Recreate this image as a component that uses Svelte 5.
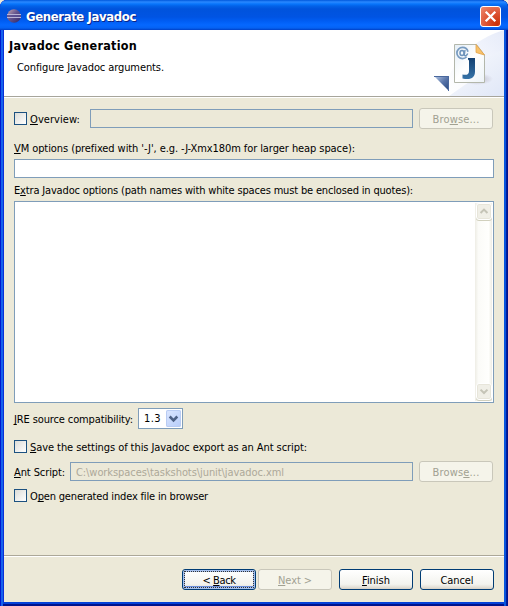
<script>
  // Spaces the letters of a label so that it takes up the given width.
  function fit(node, width) {
    const natural = node.getBoundingClientRect().width;
    node.style.letterSpacing = `${(width - natural) / node.textContent.length}px`;
  }
</script>

{#snippet label(before, key, after, width)}
  <span class="label" use:fit={width}>{before}<u>{key}</u>{after}</span>
{/snippet}

<div class="window">
  <div class="titlebar">
    <svg class="eclipse" width="16" height="16" viewBox="0 0 16 16">
      <defs>
        <linearGradient id="ball" x1="0" y1="0" x2="1" y2="1">
          <stop offset="0" stop-color="#c9a9ae" /><stop offset=".45" stop-color="#65568f" /><stop offset="1" stop-color="#2d2467" />
        </linearGradient>
      </defs>
      <circle cx="8" cy="8" r="6.8" fill="url(#ball)" />
      <path d="M1 6.5h14M1 9.5h14" stroke="#b9b4d6" stroke-width="1" />
      <path d="M1 8h14" stroke="#5a4f92" stroke-width="1.6" />
    </svg>
    <span class="label title" use:fit={110}>Generate Javadoc</span>
    <button class="close" aria-label="Close">
      <svg width="19" height="19" viewBox="0 0 19 19"><path d="M4.7 4.7l9.6 9.6M14.3 4.7l-9.6 9.6" stroke="#fff" stroke-width="2.3" /></svg>
    </button>
  </div>

  <div class="client">
    <header>
      <div class="heading">
        <span class="label h1" use:fit={128}>Javadoc Generation</span>
        <span class="label sub" use:fit={147}>Configure Javadoc arguments.</span>
      </div>
      <svg class="banner" width="75" height="66" viewBox="0 0 75 66">
        <defs>
          <linearGradient id="sweep" x1="0" y1="1" x2="1" y2="0">
            <stop offset="0" stop-color="#fff" /><stop offset=".5" stop-color="#f5f7fd" /><stop offset="1" stop-color="#e6ebf9" />
          </linearGradient>
          <linearGradient id="glow" x1="0" y1="0" x2="1" y2="1">
            <stop offset="0" stop-color="#fafbfe" /><stop offset="1" stop-color="#e0e7f7" />
          </linearGradient>
          <linearGradient id="tri" x1="0" y1="0" x2="1" y2="1">
            <stop offset="0" stop-color="#b9cbe7" /><stop offset=".5" stop-color="#5a76aa" /><stop offset="1" stop-color="#24457d" />
          </linearGradient>
          <linearGradient id="paper" x1="0" y1="0" x2="1" y2="1">
            <stop offset="0" stop-color="#e5eef6" /><stop offset=".5" stop-color="#fff" /><stop offset="1" stop-color="#edf3f8" />
          </linearGradient>
          <linearGradient id="jay" x1="0" y1="0" x2="0" y2="1">
            <stop offset="0" stop-color="#123f71" /><stop offset="1" stop-color="#3774a9" />
          </linearGradient>
          <radialGradient id="shade"><stop offset="0" stop-color="#998f9f" stop-opacity=".6" /><stop offset="1" stop-color="#998f9f" stop-opacity="0" /></radialGradient>
        </defs>
        <path d="M75 0C52 7 31 22 20 46L18 66H75Z" fill="url(#sweep)" />
        <path d="M75 20C62 23 53 31 50 45L20 66H75Z" fill="url(#glow)" />
        <ellipse cx="48" cy="49" rx="16" ry="6" fill="url(#shade)" />
        <path d="M5 46H20V61Z" fill="url(#tri)" />
        <path d="M5 46.5H19.5V61" fill="none" stroke="#4a689d" stroke-width="1" />
        <path d="M25.5 14.5H47.5L55.5 25V52.5H25.5Z" fill="url(#paper)" stroke="#b3b7ab" />
        <path d="M47 14.5L55.5 25L47 22.5Z" fill="#f9c36c" stroke="#e3a247" stroke-width=".8" />
        <circle cx="33.5" cy="23" r="5.6" fill="none" stroke="#789bc0" stroke-width="1.7" stroke-dasharray="29 7" stroke-dashoffset="-4" />
        <ellipse cx="33" cy="23" rx="2" ry="2.5" fill="none" stroke="#6f94bb" stroke-width="1.5" />
        <path d="M36 20L35.3 25C36 26.5 38 25.5 38.7 23.5" fill="none" stroke="#6f94bb" stroke-width="1.4" />
        <path d="M39 28H46V41.5C46 47.5 42 50.5 33.5 48.5V44.5C37.5 45.5 40 44.5 40 41V30.5L39 29.5Z" fill="url(#jay)" />
      </svg>
    </header>

    <main>
      <div class="row overview">
        <i class="check"></i>{@render label('', 'O', 'verview:', 50)}
        <div class="field off"></div>
        <button class="btn off">{@render label('Bro', 'w', 'se...', 47)}</button>
      </div>
      <div class="row vm">{@render label('', 'V', "M options (prefixed with '-J', e.g. -J-Xmx180m for larger heap space):", 341)}</div>
      <div class="field"></div>
      <div class="row extra">{@render label('E', 'x', 'tra Javadoc options (path names with white spaces must be enclosed in quotes):', 399)}</div>
      <div class="area">
        <div class="scroll">
          <span class="arrow"><svg width="15" height="15" viewBox="0 0 15 15"><path d="M3.8 9.2L7.5 5.5L11.2 9.2" fill="none" stroke="#c5c4b7" stroke-width="2.2" /></svg></span>
          <span class="arrow"><svg width="15" height="15" viewBox="0 0 15 15"><path d="M3.8 5.5L7.5 9.2L11.2 5.5" fill="none" stroke="#c5c4b7" stroke-width="2.2" /></svg></span>
        </div>
      </div>
      <div class="row jre">
        {@render label('', 'J', 'RE source compatibility:', 119)}
        <div class="combo">
          <span class="label" use:fit={17}>1.3</span>
          <span class="drop"><svg width="15" height="17" viewBox="0 0 15 17"><path d="M3.7 6.5L7.5 10.3L11.3 6.5" fill="none" stroke="#4d6185" stroke-width="2.6" /></svg></span>
        </div>
      </div>
      <div class="row save"><i class="check"></i>{@render label('', 'S', 'ave the settings of this Javadoc export as an Ant script:', 277)}</div>
      <div class="row ant">
        {@render label('', 'A', 'nt Script:', 51)}
        <div class="field off"><span class="label" use:fit={208}>C:\workspaces\taskshots\junit\javadoc.xml</span></div>
        <button class="btn off">{@render label('Brows', 'e', '...', 47)}</button>
      </div>
      <div class="row open"><i class="check"></i>{@render label('O', 'p', 'en generated index file in browser', 178)}</div>
    </main>

    <footer>
      <button class="btn focus">{@render label('< ', 'B', 'ack', 33)}</button>
      <button class="btn off">{@render label('', 'N', 'ext >', 34)}</button>
      <button class="btn finish">{@render label('', 'F', 'inish', 28)}</button>
      <button class="btn cancel"><span class="label" use:fit={33}>Cancel</span></button>
    </footer>
  </div>
</div>

<style>
  :global(body) { margin: 0; background: #ece9d8; }
  .window {
    box-sizing: border-box; width: 508px; height: 606px; overflow: hidden;
    display: flex; flex-direction: column; padding: 0 4px 4px;
    border-radius: 7px 7px 0 0;
    background: #0831d9;
    box-shadow: inset 1px 0 #0019cf, inset 3px 0 #1662ec, inset -1px 0 #00138c, inset -2px 0 #001ea0, inset -4px 0 #0855dd, inset 0 -2px #00138c, inset 0 -4px #0441d8;
    font: 11px "DejaVu Sans Condensed", "DejaVu Sans", sans-serif;
    font-stretch: condensed; color: #000;
  }
  .label { white-space: pre; line-height: 14px; flex: none; }
  .row > .label { padding-top: 2px; }
  u { text-decoration: underline; text-decoration-thickness: 1px; text-underline-offset: 1px; text-decoration-skip-ink: none; }
  button { font: inherit; padding: 0; }

  .titlebar {
    box-sizing: border-box; height: 30px; flex: none; margin: 0 -4px; padding: 2px 7px 0 6px;
    display: flex; align-items: center;
    background: linear-gradient(#0058dc 0, #2a88ff 2px, #0875fb 4px, #0362e8 6px, #0053dc 9px, #0054e3 17px, #005df3 21px, #0568ff 25px, #0562f3 28px, #003fc5 30px);
  }
  .title { font: bold 13px/16px "DejaVu Sans Condensed", "DejaVu Sans", sans-serif; color: #fff; text-shadow: 1px 1px #0a2588; margin: 1px auto 0 4px; }
  .close {
    box-sizing: border-box; width: 21px; height: 21px; border: 1px solid #fff; border-radius: 3px; display: flex;
    background: radial-gradient(circle at 85% 90%, #c93006, #dc5130 45%, #ed8a70);
  }

  .client { flex: 1; display: flex; flex-direction: column; background: #ece9d8; }
  header { height: 66px; flex: none; background: #fff; display: flex; justify-content: space-between; border-bottom: 1px solid #a7a59b; box-shadow: 0 1px #fff; }
  .heading { display: flex; flex-direction: column; align-items: flex-start; padding: 8px 0 0 5px; }
  .h1 { font-weight: bold; font-size: 12.5px; line-height: 16px; }
  .sub { margin: 7px 0 0 8px; }

  main { padding: 12px 10px 0; flex: 1; display: flex; flex-direction: column; }
  .row { display: flex; align-items: center; flex: none; }
  .check { box-sizing: border-box; width: 13px; height: 13px; flex: none; margin-right: 3px; border: 1px solid #1c5180; background: linear-gradient(135deg, #dcdcd7, #fff); }
  .field { box-sizing: border-box; height: 19px; flex: none; border: 1px solid #7f9db9; background: #fff; }
  .field.off { background: #ece9d8; color: #aca899; width: 323px; display: flex; align-items: center; padding: 2px 0 0 5px; }
  .btn {
    box-sizing: border-box; width: 74px; height: 21px; flex: none; border: 1px solid #003c74; border-radius: 3px;
    display: flex; align-items: center; justify-content: center; padding-top: 2px; color: #000;
    background: linear-gradient(#fff, #f3f3ee 75%, #e4e1d8 90%, #d6d0c5);
  }
  .btn.off { background: #f5f4ea; border-color: #c9c7ba; color: #a1a192; }
  .btn.focus { box-shadow: inset 0 0 0 2px #a4bfed, inset 0 -3px #6c8fdc; position: relative; }
  .btn.focus::after { content: ""; position: absolute; inset: 1px; border: 1px dotted #333; }

  .overview { height: 21px; margin-top: -1px; }
  .overview .field { margin: 0 6px 0 10px; }
  .vm { height: 14px; margin: 12px 0 4px; }
  .extra { height: 14px; margin: 5px 0; }
  .area { box-sizing: border-box; height: 202px; margin-top: -1px; flex: none; border: 1px solid #7f9db9; background: #fff; display: flex; justify-content: flex-end; padding: 1px; }
  .scroll { width: 17px; display: flex; flex-direction: column; justify-content: space-between; background: linear-gradient(90deg, #eeede5, #fbfbf8 20%, #fffffd 80%, #eeede5); }
  .arrow { box-sizing: border-box; width: 16px; height: 17px; display: flex; align-items: center; justify-content: center; border: 1px solid #fff; border-radius: 3px; margin-left: 1px; background: #f0efe7; box-shadow: inset 0 0 0 1px #e7e5da, 0 1px #d1d0bd; }
  .arrow:last-child { margin-bottom: 1px; }
  .jre { height: 21px; margin-top: 5px; }
  .combo { box-sizing: border-box; width: 45px; height: 21px; margin-left: 5px; border: 1px solid #7f9db9; background: #fff; display: flex; align-items: center; justify-content: space-between; padding: 0 1px 0 5px; }
  .drop { width: 15px; height: 17px; display: flex; border-radius: 2px; background: linear-gradient(135deg, #dce7ff, #b6ccf9); box-shadow: inset 0 0 0 1px #b9ccf3; }
  .save { height: 13px; margin-top: 11px; }
  .ant { height: 21px; margin-top: 8px; }
  .ant .field { width: 343px; margin: 0 6px 0 5px; }
  .open { height: 13px; margin-top: 7px; }

  footer { box-sizing: border-box; height: 47px; flex: none; border-top: 1px solid #aca899; box-shadow: inset 0 1px #fff; display: flex; justify-content: flex-end; align-items: flex-start; padding: 13px 10px 0 0; }
  footer .off { margin-left: 2px; }
  footer .finish, footer .cancel { margin-left: 7px; }
</style>
